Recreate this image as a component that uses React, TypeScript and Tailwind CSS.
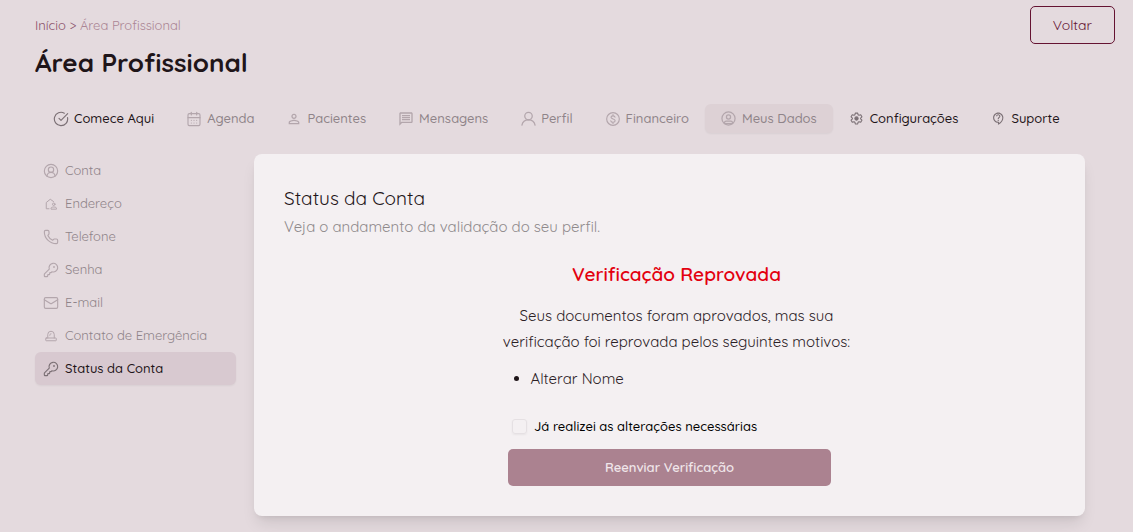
import type { ComponentType, ReactNode } from "react";
import { CalendarDays, CircleCheckBig, CircleUserRound, KeyRound, Mail, Phone } from "lucide-react";
import { MdOutlineContactSupport, MdOutlineMessage, MdPersonOutline } from "react-icons/md";
import clsx from "clsx";

type IconProps = { className?: string };

type Item = {
  label: string;
  icon: ComponentType<IconProps>;
  iconClass?: string;
  strong?: boolean;
  active?: boolean;
};

function Svg({ className, children }: IconProps & { children: ReactNode }) {
  return (
    <svg
      className={className}
      viewBox="0 0 24 24"
      fill="none"
      stroke="currentColor"
      strokeLinecap="round"
      strokeLinejoin="round"
      aria-hidden="true"
    >
      {children}
    </svg>
  );
}

function AccountIcon({ className }: IconProps) {
  return (
    <Svg className={className}>
      <circle cx="12" cy="12" r="10.5" />
      <circle cx="12" cy="9.5" r="3.3" />
      <path d="M5.500 20v-1c0-1.700 1.300-3 3-3h7c1.700 0 3 1.300 3 3v1z" />
    </Svg>
  );
}

function PersonIcon({ className }: IconProps) {
  return (
    <Svg className={className}>
      <circle cx="12" cy="8" r="6" />
      <path d="M1.500 22.500C2.500 17 6.500 14 12 14s9.500 3 10.500 8.500" />
    </Svg>
  );
}

function CoinIcon({ className }: IconProps) {
  return (
    <Svg className={className}>
      <circle cx="12" cy="12" r="9.500" />
      <path d="M15 9.200c-.3-1.200-1.500-1.900-3-1.900-1.700 0-3 .8-3 2.200 0 3.300 6.200 1.700 6.200 5 0 1.400-1.400 2.300-3.200 2.300-1.700 0-3-.8-3.300-2.100M12 5.500v1.800M12 16.800v1.800" />
    </Svg>
  );
}

function GearIcon({ className }: IconProps) {
  return (
    <Svg className={className}>
      <path d="M9.800 2h4.400l.8 3.200 1.600.9 3.200-1 2.200 3.800-2.400 2.300v1.600l2.400 2.300-2.200 3.800-3.200-1-1.600.9-.8 3.200H9.800L9 18.800l-1.600-.9-3.200 1L2 15.100l2.400-2.300v-1.600L2 8.900l2.200-3.800 3.200 1L9 5.200z" />
      <circle cx="12" cy="12" r="3" fill="currentColor" />
    </Svg>
  );
}

function HomeUserIcon({ className }: IconProps) {
  return (
    <Svg className={className}>
      <path d="M8 21.500H2.500V9l8-6.500L17 7" />
      <circle cx="17.500" cy="12.500" r="2.500" />
      <path d="M12 21.500v-1c0-1.500 2.500-2.500 5.500-2.500s5.500 1 5.500 2.500v1z" />
    </Svg>
  );
}

function SirenIcon({ className }: IconProps) {
  return (
    <Svg className={className}>
      <path d="M5.500 16V9a6.500 6.500 0 0 1 13 0v7M9.500 10.500c0-1.700 1-3 2.500-3" />
      <rect x="1.500" y="16" width="21" height="5.500" rx="1" />
    </Svg>
  );
}

const TABS: Item[] = [
  { label: "Comece Aqui", icon: CircleCheckBig, strong: true },
  { label: "Agenda", icon: CalendarDays },
  { label: "Pacientes", icon: MdPersonOutline, iconClass: "size-4" },
  { label: "Mensagens", icon: MdOutlineMessage, iconClass: "size-4" },
  { label: "Perfil", icon: PersonIcon, iconClass: "size-[15px] stroke-2" },
  { label: "Financeiro", icon: CoinIcon },
  { label: "Meus Dados", icon: AccountIcon, iconClass: "size-[15px] stroke-2", active: true },
  { label: "Configurações", icon: GearIcon, iconClass: "size-[13px] stroke-2", strong: true },
  { label: "Suporte", icon: MdOutlineContactSupport, iconClass: "size-[13px]", strong: true },
];

const SECTIONS: Item[] = [
  { label: "Conta", icon: CircleUserRound },
  { label: "Endereço", icon: HomeUserIcon, iconClass: "size-3 stroke-2" },
  { label: "Telefone", icon: Phone },
  { label: "Senha", icon: KeyRound },
  { label: "E-mail", icon: Mail },
  { label: "Contato de Emergência", icon: SirenIcon, iconClass: "size-3 stroke-2" },
  { label: "Status da Conta", icon: KeyRound, strong: true, active: true },
];

function ItemIcon({ item }: { item: Item }) {
  const Icon = item.icon;
  return (
    <span
      className={clsx(
        "flex size-4 shrink-0 items-center justify-center",
        item.strong ? "text-[#7b7075]" : "text-[#b3a6ac]",
      )}
    >
      <Icon className={item.iconClass ?? "size-4 stroke-[1.7]"} />
    </span>
  );
}

export default function App() {
  return (
    <div className="min-h-screen bg-[#e4dade] pb-4 font-[Quicksand,Lato,sans-serif] text-[#1f1519]">
      <header className="flex items-start justify-between pt-1.5 pr-4.5 pl-[35px]">
        <div className="pt-[9px]">
          <nav aria-label="Caminho" className="text-[13px] leading-5 text-[#ab8594]">
            <a href="#" className="text-[#8a526a]">Início &gt;</a> <a href="#">Área Profissional</a>
          </nav>
          <h1 className="mt-2 text-[26px] leading-10 font-bold">Área Profissional</h1>
        </div>
        <button className="h-[38px] rounded-[5px] border border-[#651332] px-[22px] text-sm text-[#651332]">
          Voltar
        </button>
      </header>

      <nav aria-label="Seções" className="mt-[21px] flex pl-[37px]">
        {TABS.map((tab) => (
          <a
            key={tab.label}
            href="#"
            className={clsx(
              "flex h-[29px] items-center gap-[5px] rounded-md px-4 text-[13px] font-medium whitespace-nowrap",
              tab.strong ? "text-[#1f1519]" : "text-[#8f8489]",
              tab.active && "bg-[#ddd1d5] shadow-xs",
            )}
          >
            <ItemIcon item={tab} />
            {tab.label}
          </a>
        ))}
      </nav>

      <div className="mt-[21px] flex items-start gap-[18px] pr-12 pl-[35px]">
        <aside className="flex w-[201px] shrink-0 flex-col">
          {SECTIONS.map((section) => (
            <a
              key={section.label}
              href="#"
              className={clsx(
                "flex h-[33px] items-center gap-1.5 rounded-md px-2 text-[13px] whitespace-nowrap",
                section.active ? "bg-[#d8c9d0] font-medium text-[#1f1519] shadow-xs" : "text-[#8f8489]",
              )}
            >
              <ItemIcon item={section} />
              {section.label}
            </a>
          ))}
        </aside>

        <main className="flex-1 rounded-lg bg-[#f4f0f2] p-[30px] shadow-lg">
          <h2 className="text-[19px] leading-7">Status da Conta</h2>
          <p className="mt-[3px] text-[15px] leading-6 text-[#8f8a8c]">
            Veja o andamento da validação do seu perfil.
          </p>

          <div className="mt-[21px] flex flex-col items-center">
            <div className="flex flex-col items-center pl-3.5">
              <h3 className="text-[19px] leading-7 font-semibold text-[#e3000f]">Verificação Reprovada</h3>
              <p className="mt-[15px] w-[352px] text-center text-[15px] leading-[26px] text-[#2b2025]">
                Seus documentos foram aprovados, mas sua verificação foi reprovada pelos seguintes motivos:
              </p>
              <ul className="mt-3 w-full list-disc pl-[30px] text-[15px] leading-6 text-[#2b2025] marker:text-[#1f1519]">
                <li>Alterar Nome</li>
              </ul>
            </div>
            <form className="mt-[25px] flex w-[323px] flex-col">
              <label className="ml-1 flex items-center gap-[7px] text-[13px] leading-5 font-medium text-black">
                <input
                  type="checkbox"
                  className="size-[15px] appearance-none rounded-[3px] border border-[#e5e0e3] shadow-xs"
                />
                Já realizei as alterações necessárias
              </label>
              <button
                type="button"
                className="mt-[13px] h-[37px] rounded-[5px] bg-[#ab8290] text-[13px] font-semibold text-[#f0e6ea]"
              >
                Reenviar Verificação
              </button>
            </form>
          </div>
        </main>
      </div>
    </div>
  );
}
